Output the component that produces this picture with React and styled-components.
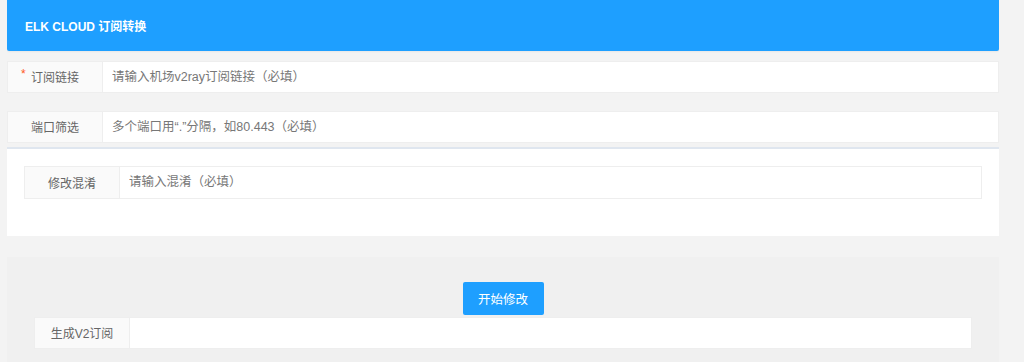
import styled, { createGlobalStyle } from 'styled-components';

const GlobalStyle = createGlobalStyle`
  html, body {
    margin: 0;
    padding: 0;
    background: #f3f3f3;
    font-family: "Liberation Sans", "Noto Sans CJK SC", sans-serif;
  }
`;

const Wrapper = styled.div`
  width: 992px;
  margin-left: 7px;
  height: 362px;
  overflow: hidden;
`;

const Header = styled.div`
  height: 51px;
  padding-left: 18px;
  display: flex;
  align-items: center;
  background: #1e9fff;
  border-radius: 0 0 2px 2px;
  box-shadow: 0 1px 2px rgba(0, 0, 0, 0.05);
  color: #fff;
  font-size: 12px;
  font-weight: bold;
`;

const Row = styled.div`
  position: relative;
  display: flex;
  height: ${(p) => p.$height || 32}px;
  margin-top: ${(p) => p.$top || 0}px;
  box-sizing: border-box;
  border: 1px solid #eee;
  background: #fff;
`;

const Label = styled.label`
  position: relative;
  flex: 0 0 94px;
  display: flex;
  align-items: center;
  justify-content: center;
  padding-bottom: 1px;
  background: #fafafa;
  border-right: 1px solid #eee;
  color: #666;
  font-size: 12px;
`;

const Required = styled.span`
  position: absolute;
  left: 13px;
  top: 5px;
  color: #ff5722;
  font-size: 12px;
`;

const Input = styled.input`
  flex: 1;
  min-width: 0;
  border: none;
  outline: none;
  background: #fff;
  padding: 0 9px 1px;
  font-family: inherit;
  font-size: 12.5px;
  color: #333;

  &::placeholder {
    color: #777;
  }
`;

const Panel = styled.div`
  margin-top: 4px;
  height: 89px;
  box-sizing: border-box;
  padding: 17px 17px 0;
  border-top: 2px solid #dfe6ef;
  background: #fff;
`;

const ResultPanel = styled.div`
  margin-top: 21px;
  height: 120px;
  padding: 25px 27px 0;
  background: #f0f0f0;
  display: flex;
  flex-direction: column;
  align-items: center;
`;

const Button = styled.button`
  width: 81px;
  height: 33px;
  border: none;
  border-radius: 2px;
  background: #1e9fff;
  color: #fff;
  font-family: inherit;
  font-size: 12.5px;
  cursor: pointer;
`;

const ResultRow = styled(Row)`
  align-self: stretch;
`;

const App = () => {
  return (
    <>
      <GlobalStyle />
      <Wrapper>
        <Header>ELK CLOUD 订阅转换</Header>

        <Row $top={10}>
          <Label>
            <Required>*</Required>
            订阅链接
          </Label>
          <Input placeholder="请输入机场v2ray订阅链接（必填）" />
        </Row>

        <Row $top={18}>
          <Label>端口筛选</Label>
          <Input placeholder="多个端口用“.”分隔，如80.443（必填）" />
        </Row>

        <Panel>
          <Row $height={33}>
            <Label>修改混淆</Label>
            <Input placeholder="请输入混淆（必填）" />
          </Row>
        </Panel>

        <ResultPanel>
          <Button>开始修改</Button>
          <ResultRow $top={2}>
            <Label>生成V2订阅</Label>
            <Input readOnly />
          </ResultRow>
        </ResultPanel>
      </Wrapper>
    </>
  );
};

export default App;
